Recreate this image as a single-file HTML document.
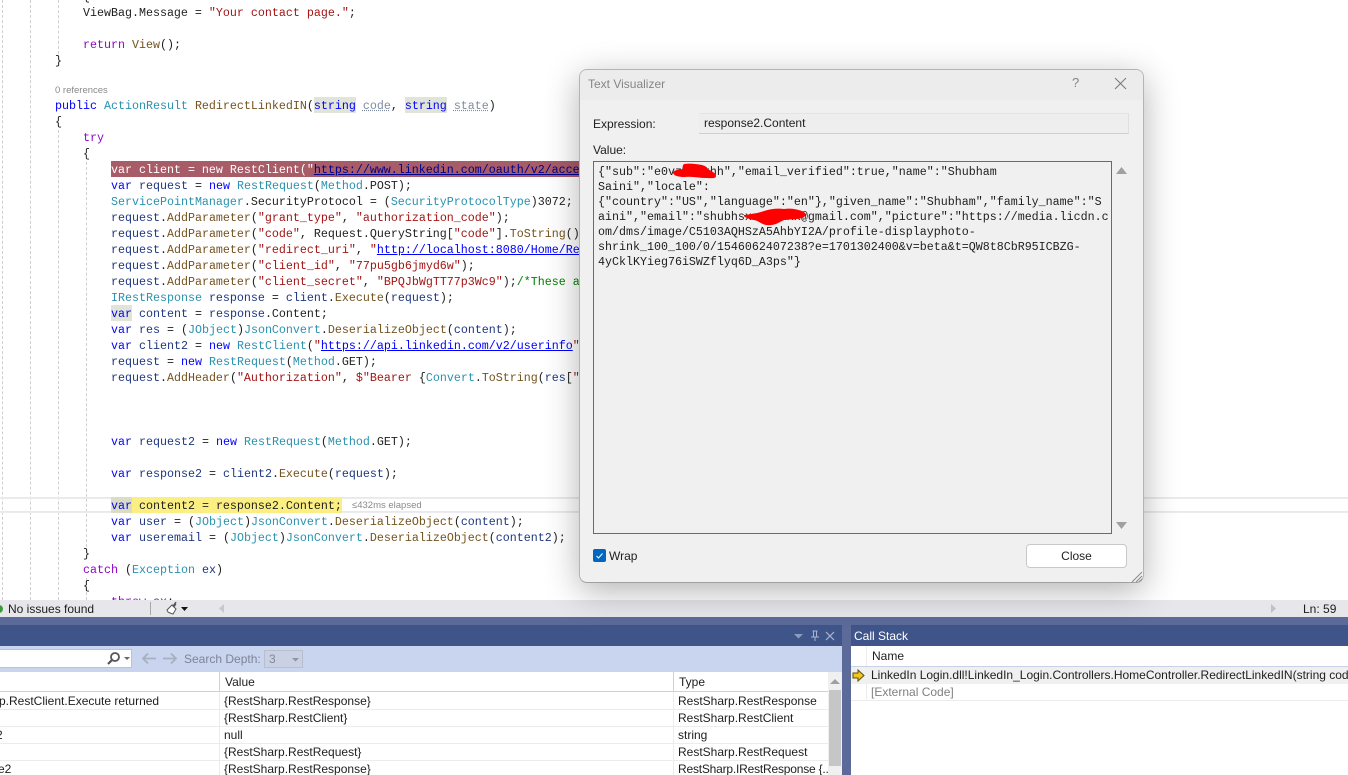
<!DOCTYPE html>
<html>
<head>
<meta charset="utf-8">
<style>
html,body{margin:0;padding:0;background:#fff}
#root{position:relative;width:1348px;height:775px;overflow:hidden;background:#fff;font-family:"Liberation Sans",sans-serif;font-size:12px;color:#1e1e1e}
.a{position:absolute}
.l{position:absolute;margin-top:1px;height:16px;line-height:16px;font-family:"Liberation Mono",monospace;font-size:11.67px;white-space:pre;color:#1e1e1e}
.k{color:#0000ff}.t{color:#2b91af}.s{color:#a31515}.m{color:#74531f}.p{color:#1f377f}.c{color:#8f08c4}.g{color:#008000}.u{color:#0000ff;text-decoration:underline}.d{color:#7f8ba0}
.guide{position:absolute;width:0;border-left:1px dashed #cfcfcf}
.t12{position:absolute;white-space:pre;font-size:12px;line-height:16px}
.r{position:absolute;left:0;width:828px;height:1px;background:#ececec}
.dl{position:absolute;left:598px;margin-top:1px;height:15px;line-height:15px;font-family:"Liberation Mono",monospace;font-size:11.67px;white-space:pre;color:#1e1e1e}
</style>
</head>
<body>
<div id="root">
<!-- guides -->
<div class="guide" style="left:2px;top:0;height:600px"></div>
<div class="guide" style="left:30px;top:0;height:600px"></div>
<div class="guide" style="left:58px;top:0;height:54px"></div>
<div class="guide" style="left:58px;top:130px;height:470px"></div>
<div class="guide" style="left:86px;top:162px;height:385px"></div>
<div class="guide" style="left:86px;top:578px;height:22px"></div>

<!-- current line -->
<div class="a" style="left:0;top:497px;width:1348px;height:1px;background:#e8e8ee;box-shadow:0 1px 0 #ececf0"></div>
<div class="a" style="left:0;top:511px;width:1348px;height:1px;background:#e8e8ee;box-shadow:0 1px 0 #ececf0"></div>
<div class="a" style="left:111px;top:497px;width:21px;height:16px;background:#dadcc4"></div>
<div class="a" style="left:132px;top:497px;width:210px;height:16px;background:#fbee83"></div>
<div class="a" style="left:111px;top:161px;width:480px;height:16px;background:#a85c68"></div>
<div class="a" style="left:314px;top:97px;width:42px;height:16px;background:#e1e5d8"></div>
<div class="a" style="left:405px;top:97px;width:42px;height:16px;background:#e1e5d8"></div>
<div class="a" style="left:111px;top:305px;width:21px;height:16px;background:#e1e5d8"></div>

<!-- code -->
<div class="l" style="left:55px;top:-12px">    {</div>
<div class="l" style="left:83px;top:4px">ViewBag.Message = <span class="s">"Your contact page."</span>;</div>
<div class="l" style="left:83px;top:36px"><span class="c">return</span> <span class="m">View</span>();</div>
<div class="l" style="left:55px;top:52px">}</div>
<div class="t12" style="left:55px;top:84px;font-size:9.5px;line-height:14px;color:#8a8a8a">0 references</div>
<div class="l" style="left:55px;top:97px"><span class="k">public</span> <span class="t">ActionResult</span> <span class="m">RedirectLinkedIN</span>(<span class="k">string</span> <span class="d" style="text-decoration:underline dotted">code</span>, <span class="k">string</span> <span class="d" style="text-decoration:underline dotted">state</span>)</div>
<div class="l" style="left:55px;top:113px">{</div>
<div class="l" style="left:83px;top:129px"><span class="c">try</span></div>
<div class="l" style="left:83px;top:145px">{</div>
<div class="l" style="left:111px;top:161px;color:#fff">var client = new RestClient("<span style="color:#00008b;text-decoration:underline">https://www.linkedin.com/oauth/v2/accessToken</span></div>
<div class="l" style="left:111px;top:177px"><span class="k">var</span> <span class="p">request</span> = <span class="k">new</span> <span class="t">RestRequest</span>(<span class="t">Method</span>.POST);</div>
<div class="l" style="left:111px;top:193px"><span class="t">ServicePointManager</span>.SecurityProtocol = (<span class="t">SecurityProtocolType</span>)3072;</div>
<div class="l" style="left:111px;top:209px"><span class="p">request</span>.<span class="m">AddParameter</span>(<span class="s">"grant_type"</span>, <span class="s">"authorization_code"</span>);</div>
<div class="l" style="left:111px;top:225px"><span class="p">request</span>.<span class="m">AddParameter</span>(<span class="s">"code"</span>, Request.QueryString[<span class="s">"code"</span>].<span class="m">ToString</span>());</div>
<div class="l" style="left:111px;top:241px"><span class="p">request</span>.<span class="m">AddParameter</span>(<span class="s">"redirect_uri"</span>, <span class="s">"</span><span class="u">http://localhost:8080/Home/RedirectLinkedIN</span></div>
<div class="l" style="left:111px;top:257px"><span class="p">request</span>.<span class="m">AddParameter</span>(<span class="s">"client_id"</span>, <span class="s">"77pu5gb6jmyd6w"</span>);</div>
<div class="l" style="left:111px;top:273px"><span class="p">request</span>.<span class="m">AddParameter</span>(<span class="s">"client_secret"</span>, <span class="s">"BPQJbWgTT77p3Wc9"</span>);<span class="g">/*These are</span></div>
<div class="l" style="left:111px;top:289px"><span class="t">IRestResponse</span> <span class="p">response</span> = <span class="p">client</span>.<span class="m">Execute</span>(<span class="p">request</span>);</div>
<div class="l" style="left:111px;top:305px"><span class="k">var</span> <span class="p">content</span> = <span class="p">response</span>.Content;</div>
<div class="l" style="left:111px;top:321px"><span class="k">var</span> <span class="p">res</span> = (<span class="t">JObject</span>)<span class="t">JsonConvert</span>.<span class="m">DeserializeObject</span>(<span class="p">content</span>);</div>
<div class="l" style="left:111px;top:337px"><span class="k">var</span> <span class="p">client2</span> = <span class="k">new</span> <span class="t">RestClient</span>(<span class="s">"</span><span class="u">https://api.linkedin.com/v2/userinfo</span><span class="s">"</span>);</div>
<div class="l" style="left:111px;top:353px"><span class="p">request</span> = <span class="k">new</span> <span class="t">RestRequest</span>(<span class="t">Method</span>.GET);</div>
<div class="l" style="left:111px;top:369px"><span class="p">request</span>.<span class="m">AddHeader</span>(<span class="s">"Authorization"</span>, <span class="s">$"Bearer </span>{<span class="t">Convert</span>.<span class="m">ToString</span>(<span class="p">res</span>[<span class="s">"acc</span></div>
<div class="l" style="left:111px;top:433px"><span class="k">var</span> <span class="p">request2</span> = <span class="k">new</span> <span class="t">RestRequest</span>(<span class="t">Method</span>.GET);</div>
<div class="l" style="left:111px;top:465px"><span class="k">var</span> <span class="p">response2</span> = <span class="p">client2</span>.<span class="m">Execute</span>(<span class="p">request</span>);</div>
<div class="l" style="left:111px;top:497px"><span class="k">var</span> content2 = response2.Content;</div>
<div class="t12" style="left:352px;top:498px;font-size:9.5px;line-height:15px;color:#8a8a8a">≤432ms elapsed</div>
<div class="l" style="left:111px;top:513px"><span class="k">var</span> <span class="p">user</span> = (<span class="t">JObject</span>)<span class="t">JsonConvert</span>.<span class="m">DeserializeObject</span>(<span class="p">content</span>);</div>
<div class="l" style="left:111px;top:529px"><span class="k">var</span> <span class="p">useremail</span> = (<span class="t">JObject</span>)<span class="t">JsonConvert</span>.<span class="m">DeserializeObject</span>(<span class="p">content2</span>);</div>
<div class="l" style="left:83px;top:545px">}</div>
<div class="l" style="left:83px;top:561px"><span class="c">catch</span> (<span class="t">Exception</span> <span class="p">ex</span>)</div>
<div class="l" style="left:83px;top:577px">{</div>
<div class="l" style="left:111px;top:593px"><span class="c">throw</span> <span class="p">ex</span>;</div>

<!-- status bar -->
<div class="a" style="left:0;top:600px;width:1348px;height:17px;background:#e6e6eb"></div>
<div class="a" style="left:-5px;top:605px;width:8px;height:8px;border-radius:50%;background:#3c9a3c"></div>
<div class="t12" style="left:8px;top:601px">No issues found</div>
<div class="a" style="left:150px;top:602px;width:1px;height:13px;background:#a8a8a8"></div>
<svg class="a" style="left:165px;top:602px" width="26" height="14" viewBox="0 0 26 14"><path d="M2 8l5-5 4 4-3 5-3-1-2-1z" fill="#fff" stroke="#555"/><path d="M7 3l2 2 2-3" fill="#555" stroke="#555"/><path d="M9 3l2-3" stroke="#555" stroke-width="1.500"/><path d="M16 5h7l-3.500 4z" fill="#111"/></svg>
<svg class="a" style="left:218px;top:603px" width="8" height="11"><path d="M6 1v9L1 5.500z" fill="#c8c8cc"/></svg>
<svg class="a" style="left:1269px;top:603px" width="8" height="11"><path d="M2 1v9l5-4.500z" fill="#c0c0c6"/></svg>
<div class="t12" style="left:1303px;top:601px">Ln: 59</div>

<!-- lower panels -->
<div class="a" style="left:0;top:617px;width:1348px;height:158px;background:#5b6a99"></div>
<div class="a" style="left:0;top:625px;width:842px;height:21px;background:#3f5589"></div>
<div class="a" style="left:851px;top:625px;width:497px;height:21px;background:#3f5589"></div>
<svg class="a" style="left:793px;top:630px" width="46" height="12"><path d="M1 4h9L5.500 8.500z" fill="#8d9bc2"/><path d="M19.500 1h5M20.500 1v6M23.500 1v6M18 7h8M22 7v4" stroke="#aab5d3" fill="none"/><path d="M33 2l8 8M41 2l-8 8" stroke="#aab5d3" stroke-width="1.200"/></svg>
<div class="t12" style="left:854px;top:628px;color:#fff">Call Stack</div>

<!-- locals/auto panel -->
<div class="a" style="left:0;top:646px;width:842px;height:26px;background:#c9d5ee"></div>
<div class="a" style="left:0;top:649px;width:132px;height:19px;background:#fff;border:1px solid #b9c3d8;border-left:0;box-sizing:border-box"></div>
<svg class="a" style="left:104px;top:651px" width="28" height="15"><circle cx="11" cy="6" r="4" fill="none" stroke="#555" stroke-width="1.800"/><path d="M8 9l-4 4" stroke="#555" stroke-width="2.200"/><path d="M20 6h6l-3 3z" fill="#666"/></svg>
<svg class="a" style="left:140px;top:651px" width="38" height="15"><path d="M16 7.500H3M8 2.500l-5 5 5 5" fill="none" stroke="#a7afc2" stroke-width="1.800"/><path d="M23 7.500h13M31 2.500l5 5-5 5" fill="none" stroke="#a7afc2" stroke-width="1.800"/></svg>
<div class="t12" style="left:184px;top:651px;color:#7c8496">Search Depth:</div>
<div class="a" style="left:264px;top:650px;width:39px;height:18px;border:1px solid #b6bfd0;box-sizing:border-box;background:#c9d1e2"></div>
<div class="t12" style="left:269px;top:651px;color:#80889a">3</div>
<svg class="a" style="left:291px;top:657px" width="9" height="6"><path d="M1 1h7L4.500 4.500z" fill="#8c94a6"/></svg>

<div class="a" style="left:0;top:672px;width:842px;height:103px;background:#fff"></div>
<div class="a" style="left:0;top:691px;width:828px;height:1px;background:#c7d2ea"></div>
<div class="a" style="left:219px;top:672px;width:1px;height:19px;background:#c7d2ea"></div>
<div class="a" style="left:673px;top:672px;width:1px;height:19px;background:#c7d2ea"></div>
<div class="a" style="left:219px;top:692px;width:1px;height:83px;background:#ececec"></div>
<div class="a" style="left:673px;top:692px;width:1px;height:83px;background:#ececec"></div>
<div class="r" style="top:709px"></div><div class="r" style="top:726px"></div><div class="r" style="top:743px"></div><div class="r" style="top:760px"></div>
<div class="t12" style="left:225px;top:674px">Value</div>
<div class="t12" style="left:679px;top:674px">Type</div>
<div class="t12" style="left:-1px;top:693px">p.RestClient.Execute returned</div>
<div class="t12" style="left:-4px;top:727px">2</div>
<div class="t12" style="left:-2px;top:761px">e2</div>
<div class="t12" style="left:224px;top:693px">{RestSharp.RestResponse}</div>
<div class="t12" style="left:224px;top:710px">{RestSharp.RestClient}</div>
<div class="t12" style="left:224px;top:727px">null</div>
<div class="t12" style="left:224px;top:744px">{RestSharp.RestRequest}</div>
<div class="t12" style="left:224px;top:761px">{RestSharp.RestResponse}</div>
<div class="t12" style="left:678px;top:693px">RestSharp.RestResponse</div>
<div class="t12" style="left:678px;top:710px">RestSharp.RestClient</div>
<div class="t12" style="left:678px;top:727px">string</div>
<div class="t12" style="left:678px;top:744px">RestSharp.RestRequest</div>
<div class="t12" style="left:678px;top:761px;letter-spacing:-.2px">RestSharp.IRestResponse {...</div>
<div class="a" style="left:828px;top:672px;width:14px;height:103px;background:#f0f0f0"></div>
<div class="a" style="left:829px;top:690px;width:12px;height:76px;background:#c6c6c6"></div>
<svg class="a" style="left:829px;top:677px" width="12" height="8"><path d="M1 7h10L6 2z" fill="#a0a0a0"/></svg>

<!-- call stack -->
<div class="a" style="left:851px;top:646px;width:497px;height:129px;background:#fff"></div>
<div class="a" style="left:866px;top:646px;width:1px;height:54px;background:#ececec"></div>
<div class="a" style="left:851px;top:666px;width:497px;height:1px;background:#c7d2ea"></div>
<div class="a" style="left:851px;top:667px;width:497px;height:17px;background:#f0f0f0"></div>
<div class="a" style="left:851px;top:700px;width:497px;height:1px;background:#ececec"></div>
<div class="t12" style="left:872px;top:648px">Name</div>
<svg class="a" style="left:852px;top:669px" width="13" height="13"><path d="M1 4h5V1l6 5.500-6 5.500V9H1z" fill="#f5c518" stroke="#5a4c10"/></svg>
<div class="t12" style="left:871px;top:667px">LinkedIn Login.dll!LinkedIn_Login.Controllers.HomeController.RedirectLinkedIN(string code, string state)</div>
<div class="t12" style="left:871px;top:684px;color:#808080">[External Code]</div>

<!-- dialog -->
<div class="a" style="left:579px;top:69px;width:565px;height:514px;box-sizing:border-box;background:#f0f0f0;border:1px solid #b4b4b4;border-bottom-color:#a0a0a0;border-radius:8px;box-shadow:0 8px 34px rgba(0,0,0,.3);overflow:hidden">
  <div class="a" style="left:0;top:0;width:100%;height:30px;background:#ececec"></div>
</div>
<div class="t12" style="left:588px;top:76px;color:#858585">Text Visualizer</div>
<div class="t12" style="left:1072px;top:75px;color:#858585;font-size:13px">?</div>
<svg class="a" style="left:1114px;top:77px" width="13" height="13"><path d="M1 1l11 11M12 1L1 12" stroke="#777" stroke-width="1"/></svg>
<div class="t12" style="left:593px;top:116px">Expression:</div>
<div class="a" style="left:699px;top:113px;width:430px;height:21px;box-sizing:border-box;background:#eeeeee;border-bottom:1px solid #d0d0d0;border-right:1px solid #e0e0e0;border-top:1px solid #e4e4e4"></div>
<div class="t12" style="left:704px;top:115px">response2.Content</div>
<div class="t12" style="left:593px;top:142px">Value:</div>
<div class="a" style="left:593px;top:161px;width:519px;height:373px;box-sizing:border-box;border:1px solid #6a6a6a;background:#f0f0f0"></div>
<div class="dl" style="top:164px">{"sub":"e0vzwxxxhh","email_verified":true,"name":"Shubham</div>
<div class="dl" style="top:179px">Saini","locale":</div>
<div class="dl" style="top:194px">{"country":"US","language":"en"},"given_name":"Shubham","family_name":"S</div>
<div class="dl" style="top:209px">aini","email":"shubhsxxxxxxxx@gmail.com","picture":"https://media.licdn.c</div>
<div class="dl" style="top:224px">om/dms/image/C5103AQHSzA5AhbYI2A/profile-displayphoto-</div>
<div class="dl" style="top:239px">shrink_100_100/0/1546062407238?e=1701302400&amp;v=beta&amp;t=QW8t8CbR95ICBZG-</div>
<div class="dl" style="top:254px">4yCklKYieg76iSWZflyq6D_A3ps"}</div>
<svg class="a" style="left:672px;top:163px" width="46" height="17"><path d="M12 1c6-1 13 0 18 1 3 1 5 2 6 4 3 2 8 4 8 7 0 3-6 2-10 2-7 0-14-2-22-1-5 0-10-1-11-4 0-3 5-3 10-4-1-2 0-4 1-5z" fill="#f00"/></svg>
<svg class="a" style="left:743px;top:208px" width="64" height="18"><path d="M1 7c8-1 14-2 20-4 6-2 14-3 20-2 6-1 12 0 18 2 4 2 5 4 2 6-6 3-14 2-20 3-6 3-10 6-18 5-5-1-7-4-12-5-5-1-11-3-10-5z" fill="#f00"/></svg>
<svg class="a" style="left:1115px;top:165px" width="13" height="10"><path d="M1 9h11L6.500 2z" fill="#a0a0a0"/></svg>
<svg class="a" style="left:1115px;top:521px" width="13" height="10"><path d="M1 1h11L6.500 8z" fill="#a0a0a0"/></svg>
<div class="a" style="left:593px;top:549px;width:13px;height:13px;background:#0067c0;border-radius:2px"></div>
<svg class="a" style="left:593px;top:549px" width="13" height="13"><path d="M3.500 7l2 2 4-4.500" fill="none" stroke="#fff" stroke-width="1"/></svg>
<div class="t12" style="left:609px;top:548px">Wrap</div>
<div class="a" style="left:1026px;top:544px;width:101px;height:24px;box-sizing:border-box;background:#fff;border:1px solid #c8c8c8;border-radius:4px;text-align:center;line-height:22px;font-size:12px">Close</div>
<svg class="a" style="left:1131px;top:571px" width="12" height="12"><path d="M11 1L1 11M11 5l-6 6M11 8l-3 3" stroke="#8a8a8a" stroke-width="1"/></svg>
</div>
</body>
</html>
